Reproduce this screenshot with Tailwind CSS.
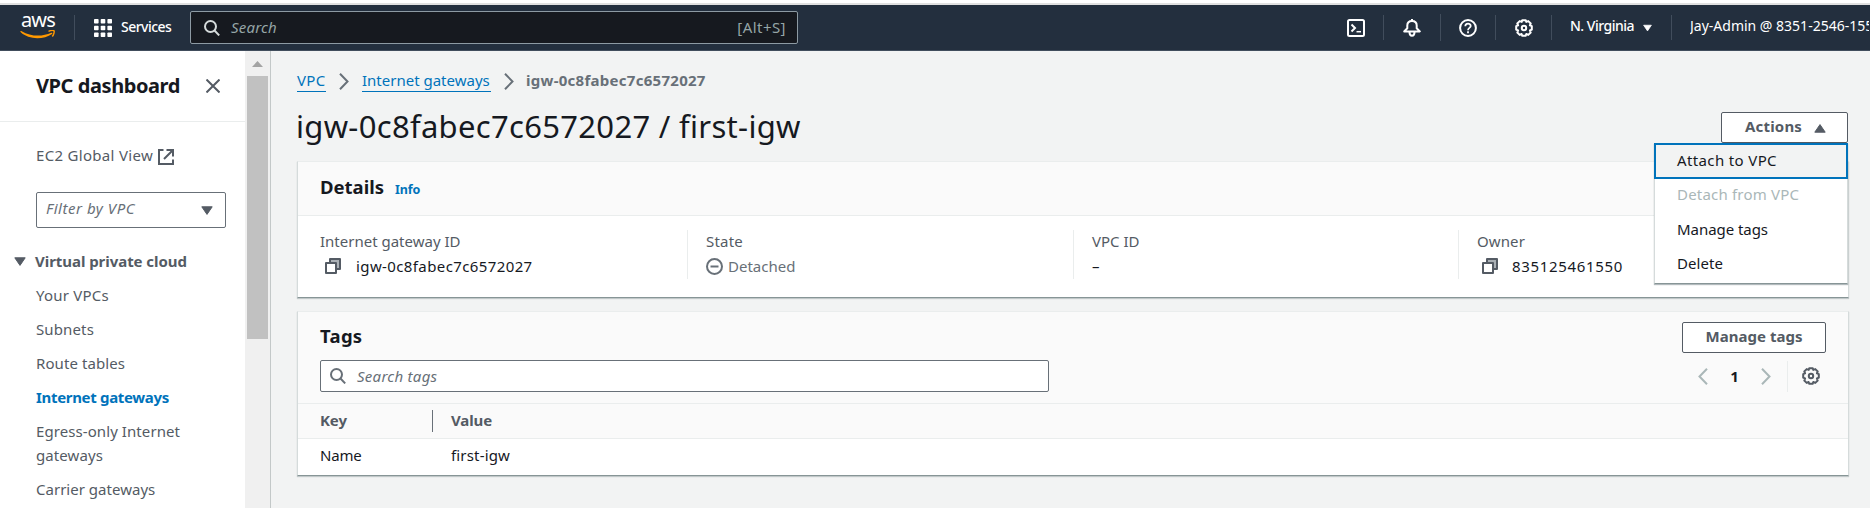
<!DOCTYPE html>
<html lang="en">
<head>
<meta charset="utf-8">
<title>igw-0c8fabec7c6572027 | VPC Console</title>
<script src="https://cdn.jsdelivr.net/npm/@tailwindcss/browser@4"></script>
</head>
<body class="w-[1870px] h-[508px] overflow-hidden bg-[#f2f3f3] font-['Noto_Sans',sans-serif] text-[15px] leading-6 text-[#16191f] whitespace-nowrap">
<svg class="hidden">
  <symbol id="gear" viewBox="0 0 18 18"><g fill="none" stroke="currentColor" stroke-width="2"><path stroke-linejoin="round" d="M7.3 1.2h3.4l.6 1.7 2-.8 2.4 2.4-.8 1.9 1.9.8v3.5l-1.9.8.8 2-2.4 2.4-2-.9-.7 1.8H7.3L6.600 15l-1.900.9-2.400-2.400.8-2-1.900-.8V7.200l1.900-.8-.8-1.900 2.400-2.400 2 .8z"/><circle cx="9" cy="9" r="2.200"/></g></symbol>
  <symbol id="copy" viewBox="0 0 16 16"><g fill="none" stroke="currentColor" stroke-width="2" stroke-linejoin="round"><path fill="#aab0b5" stroke="none" d="M5 2h9v8h-3V5H5z"/><path d="M5 4V1h10v10h-3"/><path d="M1 5h10v10H1z"/></g></symbol>
  <symbol id="lens" viewBox="0 0 16 16"><g fill="none" stroke="currentColor" stroke-width="2"><circle cx="6.500" cy="6.500" r="5.500"/><path d="M10.500 10.500l4.700 4.900"/></g></symbol>
  <symbol id="chev" viewBox="0 0 10 17"><path fill="none" stroke="currentColor" stroke-width="2" d="M1 .8l7.500 7.700L1 16.200"/></symbol>
  <symbol id="caret" viewBox="0 0 12 9"><path fill="currentColor" stroke="currentColor" stroke-linejoin="round" d="M.8.8h10.400L6 8.400z"/></symbol>
</svg>

<div class="h-[3px] bg-white"></div>
<div class="h-[2px] bg-[#e0e0e0]"></div>
<header class="flex h-[46px] items-start border-b border-[#414d5c] bg-[#232f3e] text-white">
  <div class="ml-5 flex h-11 w-[36px] flex-col items-center pt-[4px]">
    <span class="h-[20px] text-[20px] leading-[21px] tracking-[-0.8px]">aws</span>
    <svg class="mt-px h-[10px] w-[36px]" viewBox="0 0 36 10"><path fill="#ff9900" d="M.4 1.300c.3-.5.8-.4 1.300-.1C10.500 6.500 22 7 31.300 2.800c1-.4 1.500.5.700 1.100C23.500 10 8.500 9.700.8 2.300.4 1.900.3 1.600.4 1.300z"/><path fill="none" stroke="#ff9900" stroke-width="1.400" stroke-linejoin="round" d="M28.500 1.300c2-.8 4.700-1 5.500-.5.6.7-.2 3.800-1.700 5.700"/></svg>
  </div>
  <div class="mt-[10px] ml-[18px] h-[25px] w-px bg-[#414d5c]"></div>
  <svg class="mt-[14px] ml-[19px] h-[18px] w-[18px]" viewBox="0 0 18 18" fill="#fff"><rect width="4.600" height="4.600" rx=".8"/><rect x="6.700" width="4.600" height="4.600" rx=".8"/><rect x="13.400" width="4.600" height="4.600" rx=".8"/><rect y="6.700" width="4.600" height="4.600" rx=".8"/><rect x="6.700" y="6.700" width="4.600" height="4.600" rx=".8"/><rect x="13.400" y="6.700" width="4.600" height="4.600" rx=".8"/><rect y="13.400" width="4.600" height="4.600" rx=".8"/><rect x="6.700" y="13.400" width="4.600" height="4.600" rx=".8"/><rect x="13.400" y="13.400" width="4.600" height="4.600" rx=".8"/></svg>
  <span class="mt-[10px] ml-[9px] w-[69px] text-[14px] font-medium tracking-[-0.52px]">Services</span>
  <div class="mt-[6px] flex h-[33px] w-[608px] items-center rounded-[2px] border border-[#8d9aa3] bg-[#16191f] pr-[11px] pl-[13px]">
    <svg class="h-4 w-4 text-[#d5dbdb]"><use href="#lens"/></svg>
    <span class="ml-[11px] pb-[2px] text-[15px] tracking-[0.2px] text-[#95a5a6] italic">Search</span>
    <span class="ml-auto pb-px tracking-[0.45px] text-[#95a5a6]">[Alt+S]</span>
  </div>
  <svg class="mt-[14px] ml-[549px] h-[18px] w-[18px]" viewBox="0 0 18 18" fill="none" stroke="#fff" stroke-width="2"><rect x="1" y="1" width="16" height="16" rx="1.500"/><path d="M4.500 5.500L8 9l-3.500 3.500"/><path stroke-width="1.500" d="M9.500 12.700H14"/></svg>
  <div class="mt-[10px] ml-[18px] h-[25px] w-px bg-[#414d5c]"></div>
  <svg class="mt-[14px] ml-[19px] h-[18px] w-[18px]" viewBox="0 0 18 18" fill="none" stroke="#fff" stroke-width="2" stroke-linejoin="round"><path d="M1.200 12.400L4.300 9.200V6.500C4.300 3.500 6.500 2 9 2s4.700 1.500 4.700 4.500v2.700l3.100 3.200z"/><path d="M9 2V0M6.500 13c0 5 5 5 5 0"/></svg>
  <div class="mt-[9px] ml-[19px] h-[27px] w-px bg-[#414d5c]"></div>
  <svg class="mt-[14px] ml-[18px] h-[18px] w-[18px]" viewBox="0 0 18 18" fill="none" stroke="#fff" stroke-width="2"><circle cx="9" cy="9" r="7.900"/><path stroke-width="1.800" d="M6.300 7.300c0-3.600 5.400-3.500 5.400-.3C11.700 9 9 8.800 9 11.200M9 12.300v1.900"/></svg>
  <div class="mt-[10px] ml-[18px] h-[25px] w-px bg-[#414d5c]"></div>
  <svg class="mt-[14px] ml-[19px] h-[18px] w-[18px]"><use href="#gear"/></svg>
  <div class="mt-[10px] ml-[18px] h-[25px] w-px bg-[#414d5c]"></div>
  <span class="mt-[9px] ml-[18px] w-[71px] text-[14px] font-medium tracking-[-0.5px]">N. Virginia</span>
  <svg class="mt-[19px] ml-[2px] h-[8px] w-[9px]" preserveAspectRatio="none"><use href="#caret"/></svg>
  <div class="mt-[10px] ml-[19px] h-[25px] w-px bg-[#414d5c]"></div>
  <span class="mt-[9px] ml-[18px] w-[179px] overflow-hidden text-[14px]">Jay-Admin @ 8351-2546-1550</span>
</header>

<div class="flex h-[457px]">
  <aside class="w-[245px] shrink-0 bg-white text-[#545b64]">
    <div class="flex h-[71px] items-center border-b border-[#eaeded] pl-9">
      <h2 class="w-[170px] text-[20px] font-bold tracking-[-0.42px] text-[#16191f]">VPC dashboard</h2>
      <svg class="h-[14px] w-[14px]" viewBox="0 0 14 14" stroke="#545b64" stroke-width="2"><path d="M.5.5l13 13M13.500.5l-13 13"/></svg>
    </div>
    <div class="mt-[21px] flex h-6 items-center pl-9">
      <span class="w-[122px] tracking-[0.31px]">EC2 Global View</span>
      <svg class="mt-[3px] h-4 w-4" viewBox="0 0 16 16" fill="none" stroke="#545b64" stroke-width="2"><path d="M5.500 1H1v14h14v-4.500M8.500 1H15v6.500M15 1L6 10"/></svg>
    </div>
    <div class="mt-[25px] ml-9 flex h-9 w-[190px] items-center rounded-[2px] border border-[#687078] pr-3 pl-[9px]">
      <span class="pb-1 tracking-[0.53px] text-[#687078] italic">Filter by VPC</span>
      <svg class="mt-px ml-auto h-[9px] w-3"><use href="#caret"/></svg>
    </div>
    <div class="mt-[21px] flex h-6 items-center pl-[14px] font-bold">
      <svg class="h-[9px] w-3"><use href="#caret"/></svg>
      <span class="ml-[9px] tracking-[-0.05px]">Virtual private cloud</span>
    </div>
    <nav class="mt-[10px] flex flex-col gap-[10px] pl-9">
      <a class="tracking-[0.23px]">Your VPCs</a>
      <a class="tracking-[0.13px]">Subnets</a>
      <a class="tracking-[0.08px]">Route tables</a>
      <a class="font-bold tracking-[-0.32px] text-[#0073bb]">Internet gateways</a>
      <a class="tracking-[0.08px]">Egress-only Internet<br>gateways</a>
      <a class="tracking-[0.02px]">Carrier gateways</a>
    </nav>
  </aside>
  <div class="flex w-[25px] shrink-0 flex-col bg-[#f0f0f0] px-[2px] pt-[10px]">
    <svg class="ml-[5px] h-[6px] w-[11px]" viewBox="0 0 11 6"><path fill="#a3a3a3" d="M5.500 0L11 6H0z"/></svg>
    <div class="mt-[9px] h-[263px] w-[21px] bg-[#c1c1c1]"></div>
  </div>
  <div class="w-px shrink-0 bg-[#c3c8c8]"></div>

  <main class="w-[1577px] pl-[26px]">
    <nav class="mt-[18px] flex h-6 items-center text-[#687078]">
      <a class="h-[22px] w-[29px] border-b border-[#0073bb] leading-[21px] tracking-[0.3px] text-[#0073bb]">VPC</a>
      <svg class="ml-[13px] h-[17px] w-[10px]"><use href="#chev"/></svg>
      <a class="ml-[13px] h-[22px] w-[129px] border-b border-[#0073bb] leading-[21px] text-[#0073bb]">Internet gateways</a>
      <svg class="ml-[13px] h-[17px] w-[10px]"><use href="#chev"/></svg>
      <span class="ml-3 h-[22px] leading-[21px] font-bold tracking-[0.28px]">igw-0c8fabec7c6572027</span>
    </nav>
    <div class="mt-[13px] flex h-[43px] items-start justify-between">
      <h1 class="mt-px -ml-px text-[31px] leading-[39px] tracking-[0.31px]">igw-0c8fabec7c6572027 / first-igw</h1>
      <div class="relative mt-[6px]">
        <button class="flex h-[31px] w-[127px] items-center rounded-[2px] border border-[#545b64] bg-white pb-[2px] pl-[23px] font-bold tracking-[0.18px] text-[#545b64]"><span class="-mt-px">Actions</span>
          <svg class="mt-[3px] ml-[12px] h-[9px] w-3 rotate-180"><use href="#caret"/></svg>
        </button>
        <div class="absolute top-[31px] right-0 flex h-[141px] w-[194px] flex-col border border-[#d5dbdb] border-t-0 border-b-[#879596] bg-white shadow-[0_1px_1px_rgba(0,28,36,0.3)]">
          <a class="-mx-px flex h-9 items-center border-2 border-[#0073bb] bg-[#f2f3f3] pb-[2px] pl-[21px] tracking-[0.37px]">Attach to VPC</a>
          <a class="h-[34px] pl-[22px] leading-[31px] tracking-[0.19px] text-[#aab7b8]">Detach from VPC</a>
          <a class="h-[34px] pl-[22px] leading-[33px] tracking-[-0.05px]">Manage tags</a>
          <a class="h-[34px] pl-[22px] leading-[33px] tracking-[0.06px]">Delete</a>
        </div>
      </div>
    </div>

    <section class="mt-[12px] h-[137px] w-[1552px] border border-[#d5dbdb] border-t-[#eaeded] border-b-[#879596] bg-white shadow-[0_1px_1px_rgba(0,28,36,0.2)]">
      <div class="flex h-[54px] items-baseline border-b border-[#eaeded] bg-[#fafafa] pt-[13px] pl-[22px]">
        <h2 class="w-[75px] text-[18.500px] font-bold">Details</h2>
        <a class="text-[12.500px] font-bold tracking-[-0.15px] text-[#0073bb]">Info</a>
      </div>
      <div class="mt-[14px] flex h-[49px]">
        <div class="w-[389px] shrink-0 pl-[22px]">
          <div class="-mt-px leading-[25px] text-[#545b64]">Internet gateway ID</div>
          <div class="flex h-6 items-center"><svg class="ml-[5px] h-4 w-4 text-[#545b64]"><use href="#copy"/></svg><span class="ml-[15px] tracking-[0.39px]">igw-0c8fabec7c6572027</span></div>
        </div>
        <div class="w-[386px] shrink-0 border-l border-[#eaeded] pl-[18px]">
          <div class="-mt-px leading-[25px] tracking-[0.2px] text-[#545b64]">State</div>
          <div class="flex h-6 items-center text-[#687078]"><svg class="h-[17px] w-[17px]" viewBox="0 0 17 17" fill="none" stroke="currentColor" stroke-width="2"><circle cx="8.500" cy="8.500" r="7.500"/><path d="M4.500 8.500h8"/></svg><span class="ml-[5px]">Detached</span></div>
        </div>
        <div class="w-[385px] shrink-0 border-l border-[#eaeded] pl-[18px]">
          <div class="-mt-px leading-[25px] text-[#545b64]">VPC ID</div>
          <div class="h-6">–</div>
        </div>
        <div class="grow border-l border-[#eaeded] pl-[18px]">
          <div class="-mt-px leading-[25px] tracking-[0.11px] text-[#545b64]">Owner</div>
          <div class="flex h-6 items-center"><svg class="ml-[5px] h-4 w-4 text-[#545b64]"><use href="#copy"/></svg><span class="ml-[14px] tracking-[0.67px]">835125461550</span></div>
        </div>
      </div>
    </section>

    <section class="mt-[13px] h-[165px] w-[1552px] border border-[#d5dbdb] border-t-[#eaeded] border-b-[#879596] bg-white shadow-[0_1px_1px_rgba(0,28,36,0.2)]">
      <div class="flex h-[92px] justify-between border-b border-[#eaeded] bg-[#fafafa] pr-[22px] pl-[22px]">
        <div>
          <h2 class="mt-[12px] text-[18.500px] font-bold tracking-[0.3px]">Tags</h2>
          <div class="mt-[12px] flex h-8 w-[729px] items-center rounded-[2px] border border-[#687078] bg-white pl-[9px] text-[#687078]">
            <svg class="h-4 w-4"><use href="#lens"/></svg>
            <span class="ml-[11px] tracking-[0.28px] italic">Search tags</span>
          </div>
        </div>
        <div class="flex flex-col items-end">
          <button class="mt-[10px] h-[31px] w-[144px] rounded-[2px] border border-[#545b64] bg-white pb-[2px] leading-[27px] font-bold tracking-[0.03px] text-[#545b64]">Manage tags</button>
          <div class="mt-[8px] flex h-[31px] items-center pr-[6px] pb-px text-[#aab7b8]">
            <svg class="h-[17px] w-[10px] rotate-180"><use href="#chev"/></svg>
            <span class="w-[53px] pb-px text-center font-bold text-[#16191f]">1</span>
            <svg class="h-[17px] w-[10px]"><use href="#chev"/></svg>
            <div class="ml-4 h-[31px] w-px bg-[#eaeded]"></div>
            <svg class="ml-[14px] h-[18px] w-[18px] text-[#545b64]"><use href="#gear"/></svg>
          </div>
        </div>
      </div>
      <div class="flex h-[35px] items-center border-b border-[#eaeded] bg-[#fafafa] pl-[22px] font-bold text-[#545b64]">
        <span class="w-[112px] pb-[2px] tracking-[-0.1px]">Key</span>
        <div class="h-[22px] w-px bg-[#687078]"></div>
        <span class="ml-[18px] pb-[2px] tracking-[-0.1px]">Value</span>
      </div>
      <div class="flex h-[34px] items-center pb-[2px] pl-[22px]">
        <span class="w-[131px] tracking-[-0.2px]">Name</span>
        <span class="tracking-[0.17px]">first-igw</span>
      </div>
    </section>
  </main>
</div>
</body>
</html>
